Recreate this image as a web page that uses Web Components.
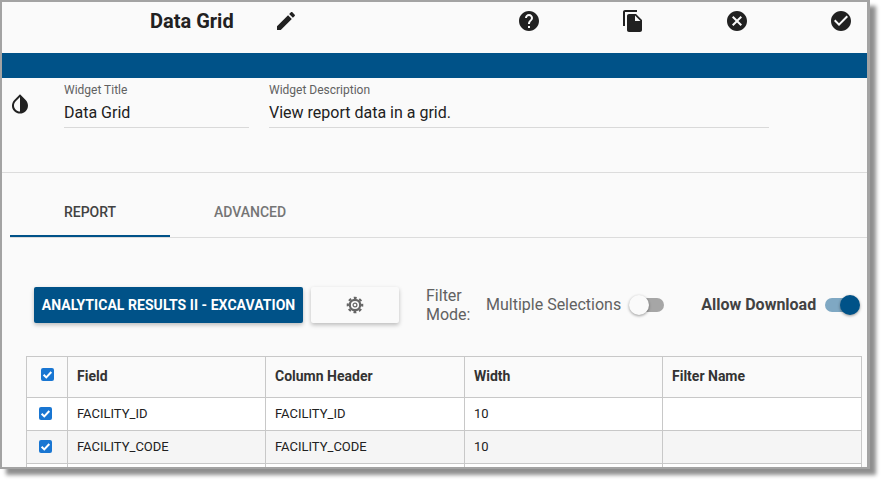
<!DOCTYPE html>
<html><head><meta charset="utf-8">
<style>
html,body{margin:0;padding:0;background:#fff;width:884px;height:484px;overflow:hidden}
body{font-family:Roboto,"Liberation Sans",sans-serif;color:#212121}
</style></head><body>
<widget-window>
  <editor-header></editor-header>
  <blue-band></blue-band>
  <title-fields></title-fields>
  <tab-bar></tab-bar>
  <report-toolbar></report-toolbar>
  <field-table></field-table>
</widget-window>
<script>
const P={
edit:'M3 17.25V21h3.75L17.81 9.94l-3.75-3.75L3 17.25zM20.71 7.04c.39-.39.39-1.02 0-1.41l-2.34-2.34c-.39-.39-1.02-.39-1.41 0l-1.83 1.83 3.75 3.75 1.83-1.83z',
help:'M12 2C6.48 2 2 6.48 2 12s4.48 10 10 10 10-4.48 10-10S17.52 2 12 2zm1 17h-2v-2h2v2zm2.07-7.75l-.9.92C13.45 12.9 13 13.5 13 15h-2v-.5c0-1.1.45-2.1 1.17-2.83l1.24-1.26c.37-.36.59-.86.59-1.41 0-1.1-.9-2-2-2s-2 .9-2 2H8c0-2.21 1.79-4 4-4s4 1.79 4 4c0 .88-.36 1.68-.93 2.25z',
copy:'M16 1H4c-1.1 0-2 .9-2 2v14h2V3h12V1zm-1 4l6 6v10c0 1.1-.9 2-2 2H7.99C6.89 23 6 22.1 6 21l.01-14c0-1.1.89-2 1.99-2h7zm-1 7h5.5L14 6.5V12z',
cancel:'M12 2C6.47 2 2 6.47 2 12s4.47 10 10 10 10-4.47 10-10S17.53 2 12 2zm5 13.59L15.59 17 12 13.41 8.41 17 7 15.59 10.59 12 7 8.41 8.41 7 12 10.59 15.59 7 17 8.41 13.41 12 17 15.59z',
check:'M12 2C6.48 2 2 6.48 2 12s4.48 10 10 10 10-4.48 10-10S17.52 2 12 2zm-2 15l-5-5 1.41-1.41L10 14.17l7.59-7.59L19 8l-9 9z',
drop:'M17.66 7.93L12 2.27 6.34 7.93c-3.12 3.12-3.12 8.19 0 11.31C7.9 20.8 9.95 21.58 12 21.58c2.05 0 4.1-.78 5.66-2.34 3.12-3.12 3.12-8.19 0-11.31zM12 19.59c-1.6 0-3.11-.62-4.24-1.76C6.62 16.69 6 15.19 6 13.59s.62-3.11 1.76-4.24L12 5.1v14.49z'
};
const svg=(k,s=24,c='#212121')=>`<svg width="${s}" height="${s}" viewBox="0 0 24 24" fill="${c}" style="display:block"><path d="${P[k]}"/></svg>`;
const gear=`<svg width="20" height="20" viewBox="0 0 20 20" fill="none" stroke="#666" style="display:block"><circle cx="10" cy="10" r="5.2" stroke-width="2.2"/><circle cx="10" cy="10" r="7.2" stroke-width="2.2" stroke-dasharray="2.9 2.755" stroke-dashoffset="1.45"/><circle cx="10" cy="10" r="1.9" stroke-width="1.2"/></svg>`;
function def(name,css,html){
  customElements.define(name,class extends HTMLElement{
    constructor(){super();this.attachShadow({mode:'open'}).innerHTML=`<style>${css}</style>${typeof html==='function'?html(this):html}`;}
  });
}
def('widget-window',`:host{display:block;box-sizing:border-box;width:870px;height:469px;background:#fafafa;border:2px solid #a3a3a3;border-right-width:3px;box-shadow:6px 6px 4px #8f8f8f;overflow:hidden}`,`<slot></slot>`);
def('editor-header',`:host{display:flex;align-items:center;height:51px;padding:0 0 0 148px;box-sizing:border-box}
.t{font-size:20px;font-weight:700;width:124px;line-height:38px;margin-top:-13px;white-space:nowrap}
.i{margin-top:-13px}.r{display:flex;gap:80px;margin-left:219px;margin-top:-13px}`,
`<div class="t">Data Grid</div><div class="i">${svg('edit')}</div><div class="r">${svg('help')}${svg('copy')}${svg('cancel')}${svg('check')}</div>`);
def('blue-band',`:host{display:block;height:25px;background:#005288}`,``);
def('text-field',`:host{display:block;width:var(--w);font-size:16px}
.l{font-size:12px;line-height:14px;color:#616161}
.v{line-height:24px;margin-top:4px;padding-bottom:2px;border-bottom:1px solid #d9d9d9;color:#212121}`,
`<div class="l"><slot name="label"></slot></div><div class="v"><slot></slot></div>`);
def('title-fields',`:host{display:flex;align-items:flex-start;height:95px;box-sizing:border-box;border-bottom:1px solid #dcdcdc;padding:5px 0 0 6px}
.d{width:24px;margin-top:9px;margin-right:32px}
.s{width:20px}`,
`<div class="d">${svg('drop',24)}</div>
<text-field style="--w:185px"><span slot="label">Widget Title</span>Data Grid</text-field><div class="s"></div>
<text-field style="--w:500px"><span slot="label">Widget Description</span>View report data in a grid.</text-field>`);
def('tab-bar',`:host{display:flex;height:65px;box-sizing:border-box;margin-left:8px;border-bottom:1px solid #dcdcdc;font-size:14px;font-weight:500}
.t{width:160px;display:flex;align-items:center;justify-content:center;box-sizing:border-box;height:64px;padding-top:14px;color:#757575}
.a{color:#424242;border-bottom:2px solid #005288;padding-top:16px}`,
`<div class="t a">REPORT</div><div class="t">ADVANCED</div>`);
def('toggle-switch',`:host{display:block;position:relative;width:33px;height:14px;border-radius:7px;background:#a6a6a6;flex:none}
:host([on]){background:#7fa8c3}
i{position:absolute;top:-3px;left:-2px;width:20px;height:20px;border-radius:50%;background:#fafafa;box-shadow:0 1px 3px rgba(0,0,0,.4)}
:host([on]) i{left:auto;right:-2px;background:#005288}`,`<i></i>`);
def('report-toolbar',`:host{display:flex;align-items:center;height:118px;box-sizing:border-box;padding:16px 0 0 32px;font-size:16px;color:#616161}
.b{display:flex;align-items:center;justify-content:center;height:36px;border-radius:2px;box-shadow:0 2px 4px rgba(0,0,0,.25);box-sizing:border-box;flex:none}
.p{width:269px;background:#005288;color:#fff;font-size:14px;font-weight:700;letter-spacing:.05px;white-space:nowrap}
.g{width:88px;margin-left:8px;background:#fafafa}
.f{margin-left:27px;width:60px;line-height:19px;flex:none}
.m{white-space:nowrap;padding-bottom:2px}
.a{margin-left:37px;font-weight:700;color:#424242;white-space:nowrap;padding-bottom:2px}`,
`<div class="b p">ANALYTICAL RESULTS II - EXCAVATION</div><div class="b g">${gear}</div>
<div class="f">Filter Mode:</div><div class="m">Multiple Selections</div><toggle-switch style="margin-left:10px"></toggle-switch>
<div class="a">Allow Download</div><toggle-switch on style="margin-left:9px"></toggle-switch>`);
def('check-box',`:host{display:block;width:13px;height:13px;border-radius:2px;background:#1976d2}
svg{display:block}`,`<svg width="13" height="13" viewBox="0 0 13 13" fill="none" stroke="#fff" stroke-width="2"><path d="M2.6 6.7l2.7 2.7 5-5.4"/></svg>`);
def('field-table',`:host{display:block;margin-left:24px;width:836px}
.g{display:grid;grid-template-columns:41px 198px 199px 198px 199px;border-top:1px solid #c8c8c8;border-left:1px solid #c8c8c8}
.c{box-sizing:border-box;border-right:1px solid #c8c8c8;border-bottom:1px solid #c8c8c8;display:flex;align-items:center;padding:0 0 2px 9px;height:33px;font-size:13px;color:#212121;background:#fff}
.h{height:41px;font-size:14px;font-weight:700;color:#333;background:#fafafa}
.x{justify-content:center;padding:0 3px 1px 0}.h.x{padding:0 0 5px 0}
.e{background:#f5f5f5}`,
()=>{
 const r=(n,w,e)=>`<div class="c x ${e}"><check-box></check-box></div><div class="c ${e}">${n}</div><div class="c ${e}">${n}</div><div class="c ${e}">${w}</div><div class="c ${e}"></div>`;
 return `<div class="g"><div class="c h x"><check-box></check-box></div><div class="c h">Field</div><div class="c h">Column Header</div><div class="c h">Width</div><div class="c h">Filter Name</div>
 ${r('FACILITY_ID','10','')}${r('FACILITY_CODE','10','e')}<div class="c x"></div><div class="c"></div><div class="c"></div><div class="c"></div><div class="c"></div></div>`;
});
</script>
</body></html>
